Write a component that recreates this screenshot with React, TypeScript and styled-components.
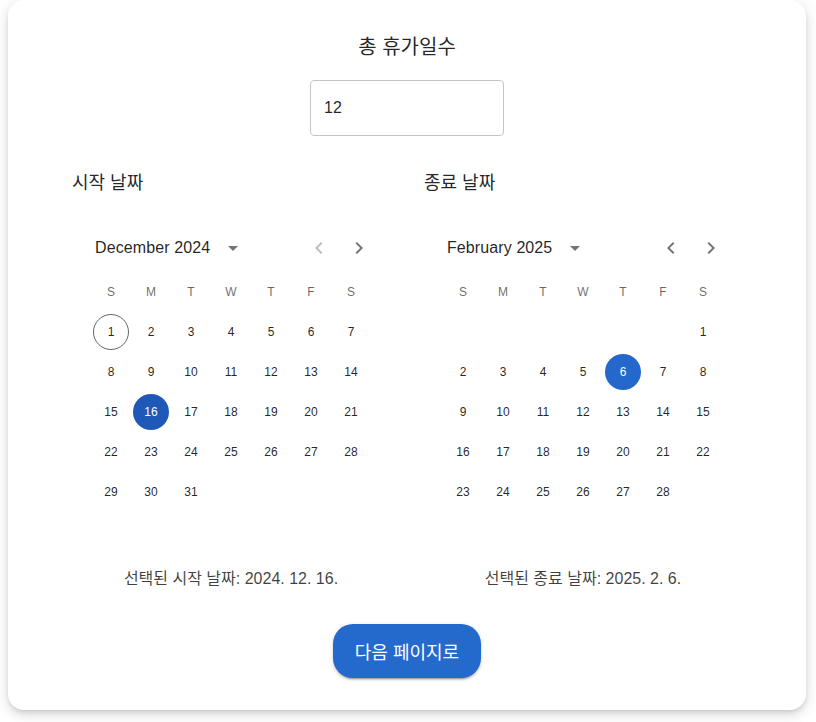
import React from "react";
import styled, { createGlobalStyle } from "styled-components";

const GlobalStyle = createGlobalStyle`
  html, body { margin: 0; padding: 0; background: #ffffff; }
  body { font-family: "Liberation Sans", "Noto Sans CJK KR", sans-serif; color: rgba(0,0,0,0.87); }
  * { box-sizing: border-box; }
`;

const Card = styled.div`
  width: 798px;
  margin: 0 0 12px 8px;
  background: #fff;
  border-radius: 16px;
  box-shadow: 0 3px 5px -1px rgba(0,0,0,0.12), 0 6px 12px 0 rgba(0,0,0,0.08), 0 1px 18px 0 rgba(0,0,0,0.08);
  padding: 32px 0 32px;
  display: flex;
  flex-direction: column;
  align-items: center;
`;

const Title = styled.h2`
  margin: 0;
  font-size: 20px;
  font-weight: 400;
  line-height: 30px;
  color: rgba(0,0,0,0.87);
`;

const Field = styled.div`
  margin-top: 18px;
  width: 194px;
  height: 56px;
  border: 1px solid #c4c4c4;
  border-radius: 4px;
  display: flex;
  align-items: center;
  padding: 0 13px;
  font-size: 16px;
  color: rgba(0,0,0,0.87);
`;

const Columns = styled.div`
  margin-top: 34px;
  display: grid;
  grid-template-columns: 320px 320px;
  column-gap: 32px;
`;

const Column = styled.div`
  display: flex;
  flex-direction: column;
`;

const Label = styled.div`
  font-size: 18px;
  line-height: 27px;
  padding-left: 1px;
  color: rgba(0,0,0,0.87);
`;

const CalendarBox = styled.div`
  margin-top: 19px;
  width: 320px;
  height: 338px;
  display: flex;
  flex-direction: column;
`;

const Header = styled.div`
  margin-top: 17px;
  margin-bottom: 9px;
  height: 30px;
  padding: 0 12px 0 24px;
  display: flex;
  align-items: center;
`;

const MonthLabel = styled.div`
  font-size: 16px;
  font-weight: 500;
  letter-spacing: 0.1px;
  margin-right: 6px;
  color: rgba(0,0,0,0.87);
`;

const IconBtn = styled.div<{ $size: number; $disabled?: boolean }>`
  width: ${(p) => p.$size}px;
  height: ${(p) => p.$size}px;
  display: flex;
  align-items: center;
  justify-content: center;
  color: ${(p) => (p.$disabled ? "rgba(0,0,0,0.26)" : "rgba(0,0,0,0.54)")};
  svg { width: 24px; height: 24px; fill: currentColor; display: block; }
`;

const Switcher = styled.div`
  margin-left: auto;
  display: flex;
`;

const Row = styled.div<{ $dow?: boolean }>`
  display: flex;
  justify-content: center;
  padding: ${(p) => (p.$dow ? "0" : "2px 0")};
`;

const Dow = styled.span`
  width: 36px;
  height: 40px;
  margin: 0 2px;
  display: flex;
  align-items: center;
  justify-content: center;
  font-size: 12px;
  color: rgba(0,0,0,0.6);
`;

const Day = styled.span<{ $selected?: boolean; $today?: boolean; $focused?: boolean; $empty?: boolean }>`
  width: 36px;
  height: 36px;
  margin: 0 2px;
  border-radius: 50%;
  display: flex;
  align-items: center;
  justify-content: center;
  font-size: 12px;
  color: ${(p) => (p.$selected ? "#fff" : "rgba(0,0,0,0.87)")};
  background: ${(p) => (p.$selected ? (p.$focused ? "#1f59b7" : "#2468cb") : "transparent")};
  border: ${(p) => (p.$today && !p.$selected ? "1px solid rgba(0,0,0,0.6)" : "none")};
  visibility: ${(p) => (p.$empty ? "hidden" : "visible")};
`;

const Days = styled.div`
  min-height: 240px;
`;

const Selected = styled.div`
  margin-top: 13px;
  text-align: center;
  font-size: 16px;
  line-height: 24px;
  color: rgba(0,0,0,0.75);
`;

const NextButton = styled.button`
  margin-top: 33px;
  width: 148px;
  height: 54px;
  border: none;
  border-radius: 20px;
  background: #2469cc;
  color: #fff;
  font-family: "Liberation Sans", "Noto Sans CJK KR", sans-serif;
  font-size: 18px;
  box-shadow: 0 3px 1px -2px rgba(0,0,0,0.2), 0 2px 2px 0 rgba(0,0,0,0.14), 0 1px 5px 0 rgba(0,0,0,0.12);
  cursor: pointer;
`;

const ArrowLeft = () => (
  <svg viewBox="0 0 24 24"><path d="M15.41 16.59 10.83 12l4.58-4.59L14 6l-6 6 6 6 1.41-1.41z" /></svg>
);
const ArrowRight = () => (
  <svg viewBox="0 0 24 24"><path d="M8.59 16.59 13.17 12 8.59 7.41 10 6l6 6-6 6-1.41-1.41z" /></svg>
);
const DropDown = () => (
  <svg viewBox="0 0 24 24"><path d="M7 10l5 5 5-5z" /></svg>
);

const MONTHS = ["January","February","March","April","May","June","July","August","September","October","November","December"];

type CalProps = {
  year: number;
  month: number; // 0-based
  selected: number;
  today?: number;
  focused?: boolean;
  prevDisabled?: boolean;
};

const Calendar: React.FC<CalProps> = ({ year, month, selected, today, focused, prevDisabled }) => {
  const first = new Date(year, month, 1).getDay();
  const count = new Date(year, month + 1, 0).getDate();
  const cells: (number | null)[] = [];
  for (let i = 0; i < first; i++) cells.push(null);
  for (let d = 1; d <= count; d++) cells.push(d);
  while (cells.length % 7) cells.push(null);
  const weeks: (number | null)[][] = [];
  for (let i = 0; i < cells.length; i += 7) weeks.push(cells.slice(i, i + 7));
  return (
    <CalendarBox>
      <Header>
        <MonthLabel>{MONTHS[month]} {year}</MonthLabel>
        <IconBtn $size={34}><DropDown /></IconBtn>
        <Switcher>
          <IconBtn $size={40} $disabled={prevDisabled}><ArrowLeft /></IconBtn>
          <IconBtn $size={40}><ArrowRight /></IconBtn>
        </Switcher>
      </Header>
      <Row $dow>
        {["S","M","T","W","T","F","S"].map((d, i) => <Dow key={i}>{d}</Dow>)}
      </Row>
      <Days>
        {weeks.map((w, wi) => (
          <Row key={wi}>
            {w.map((d, di) => (
              <Day
                key={di}
                $empty={d === null}
                $selected={d === selected}
                $today={d === today}
                $focused={focused}
              >
                {d ?? ""}
              </Day>
            ))}
          </Row>
        ))}
      </Days>
    </CalendarBox>
  );
};

export default function App() {
  return (
    <>
      <GlobalStyle />
      <Card>
        <Title>총 휴가일수</Title>
        <Field>12</Field>
        <Columns>
          <Column>
            <Label>시작 날짜</Label>
            <Calendar year={2024} month={11} selected={16} today={1} focused prevDisabled />
            <Selected>선택된 시작 날짜: 2024. 12. 16.</Selected>
          </Column>
          <Column>
            <Label>종료 날짜</Label>
            <Calendar year={2025} month={1} selected={6} />
            <Selected>선택된 종료 날짜: 2025. 2. 6.</Selected>
          </Column>
        </Columns>
        <NextButton>다음 페이지로</NextButton>
      </Card>
    </>
  );
}
